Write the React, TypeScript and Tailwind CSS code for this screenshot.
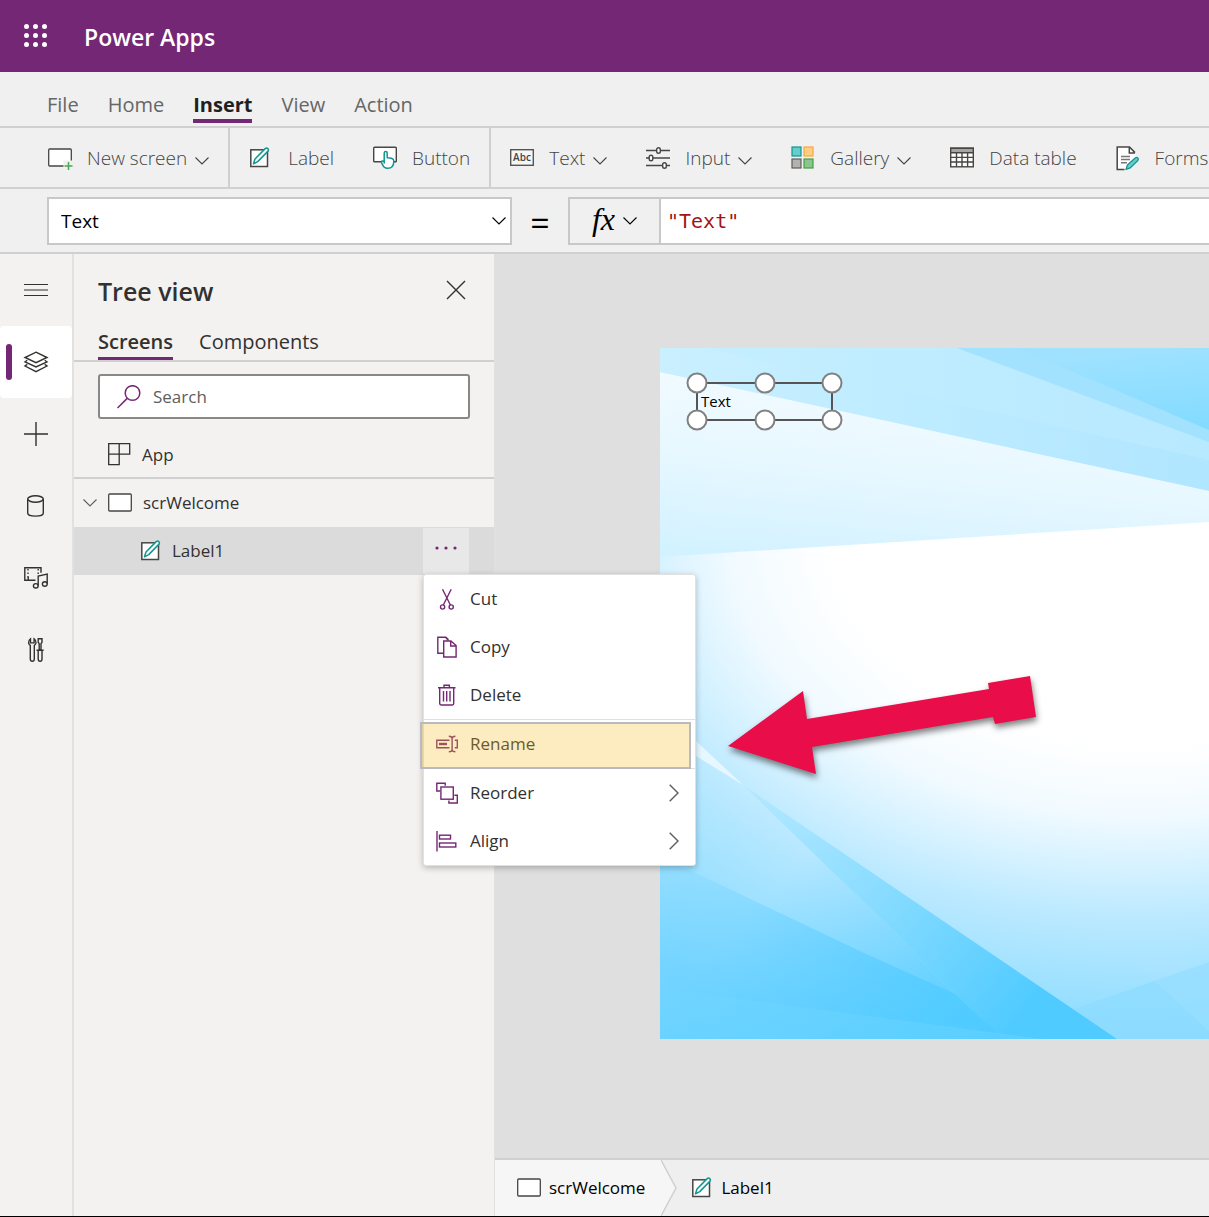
import React from "react";

type IconProps = { className?: string };

const Chevron = ({ className = "" }: IconProps) => (
  <svg viewBox="0 0 14 8" className={`h-2 w-3.5 shrink-0 ${className}`} fill="none" stroke="currentColor" strokeWidth="1.1">
    <path d="M.5.5 7 7 13.5.5" />
  </svg>
);

const ChevronRight = () => (
  <svg viewBox="0 0 10 18" className="h-[18px] w-2.5 shrink-0" fill="none" stroke="#605e5c" strokeWidth="1.4">
    <path d="M.7.7 9 9 .7 17.3" />
  </svg>
);

const Waffle = () => (
  <svg viewBox="0 0 24 24" className="size-6" fill="#fff">
    {[2.5, 11.5, 20.5].map((y) => [2.5, 11.5, 20.5].map((x) => <circle key={`${x}-${y}`} cx={x} cy={y} r="2.5" />))}
  </svg>
);

const ScreenIcon = ({ plus = false }: { plus?: boolean }) => (
  <svg viewBox="0 0 24 24" className="size-6 shrink-0 overflow-visible" fill="none">
    <rect x=".7" y="3" width="22.6" height="17" rx="1" fill="#fff" stroke="#484644" strokeWidth="1.3" />
    {plus && (
      <>
        <rect x="15.5" y="14.5" width="9" height="9" fill="#f0f0f0" />
        <path d="M20.5 16v8M16.5 20h8" stroke="#4ba64f" strokeWidth="1.5" />
      </>
    )}
  </svg>
);

const LabelIcon = () => (
  <svg viewBox="0 0 24 24" className="size-6 shrink-0 overflow-visible" fill="none">
    <rect x="1.8" y="3.8" width="16.7" height="16.7" fill="#fff" stroke="#484644" strokeWidth="1.5" />
    <path d="M4.5 17.8 6 13 16.2 2.6c1.9-1.5 4.1.6 2.8 2.5L8.7 15.6Z" fill="#fff" stroke="#0f9690" strokeWidth="1.5" strokeLinejoin="round" />
  </svg>
);

const ButtonIcon = () => (
  <svg viewBox="0 0 24 24" className="size-6 shrink-0 overflow-visible" fill="none">
    <rect x=".7" y="1.2" width="22.6" height="14.6" rx=".8" fill="#fff" stroke="#484644" strokeWidth="1.4" />
    <path d="M11.2 17V7.2c0-2.2 3-2.2 3 0v4.6c3.4.2 6.6.3 6.6 3.2 0 4.5-1.6 7.3-6 7.3-3.4 0-4.5-1.8-6.3-5.7-.5-1.7 1.5-2.3 2.7-.7Z" fill="#fff" stroke="#0f9690" strokeWidth="1.5" strokeLinejoin="round" />
  </svg>
);

const TextIcon = () => (
  <svg viewBox="0 0 24 24" className="size-6 shrink-0" fill="none">
    <rect x=".7" y="3.7" width="22.6" height="15.6" fill="#f6f6f6" stroke="#555" strokeWidth="1.4" />
    <text x="12" y="15.3" textAnchor="middle" fontSize="10" fontWeight="600" fill="#444" fontFamily="Open Sans, sans-serif">Abc</text>
  </svg>
);

const InputIcon = () => (
  <svg viewBox="0 0 24 24" className="size-6 shrink-0" fill="none" stroke="#484644" strokeWidth="1.4">
    <path d="M0 4.5h24M0 12h24M0 19.5h24" />
    <g fill="#fff">
      <rect x="10.7" y="1.7" width="3.6" height="5.6" rx="1.8" />
      <rect x="3.2" y="9.2" width="3.6" height="5.6" rx="1.8" />
      <rect x="16.7" y="16.7" width="3.6" height="5.6" rx="1.8" />
    </g>
  </svg>
);

const GalleryIcon = () => (
  <svg viewBox="0 0 24 24" className="size-6 shrink-0">
    <rect x="1" y="1" width="9" height="9" fill="#66cccc" stroke="#0f9690" strokeWidth="1.2" />
    <rect x="13" y="1" width="9" height="9" fill="#ffce85" stroke="#f9a83a" strokeWidth="1.2" />
    <rect x="1" y="13" width="9" height="9" fill="#b3b2b1" stroke="#605e5c" strokeWidth="1.2" />
    <rect x="13" y="13" width="9" height="9" fill="#8bc48d" stroke="#43a047" strokeWidth="1.2" />
  </svg>
);

const TableIcon = () => (
  <svg viewBox="0 0 24 24" className="size-6 shrink-0" fill="none" stroke="#484644" strokeWidth="1.4">
    <rect x=".7" y="2.2" width="22.6" height="18.6" fill="#fff" />
    <path d="M.7 2.2h22.6v4.6H.7Z" fill="#a6a5a4" />
    <path d="M.7 11.4h22.6M.7 16h22.6M6.5 6.8v14M12 6.8v14M17.6 6.8v14" />
  </svg>
);

const FormsIcon = () => (
  <svg viewBox="0 0 24 24" className="size-6 shrink-0 overflow-visible" fill="none">
    <path d="M1.2 1h12.5l5.5 5.6V16L9 23H1.2Z" fill="#fff" />
    <path d="M8.5 23.5H1.2V1h12.3l5.5 5.6M13.3 1v6H19" stroke="#484644" strokeWidth="1.5" />
    <path d="M5 10.5h9M5 13.5h9M5 16.8h6" stroke="#777" strokeWidth="1.4" />
    <path d="m10 23.5 1.4-4.5 7.8-7c2-1.6 4.1.6 2.6 2.5l-7.5 7.4Z" fill="#66cccc" stroke="#0f9690" strokeWidth="1.3" strokeLinejoin="round" />
  </svg>
);

const railIcons: { name: string; art: React.ReactNode }[] = [
  { name: "Menu", art: <path d="M0 6.5h24M0 12h24M0 17.5h24" strokeWidth="1.1" /> },
  {
    name: "Tree view",
    art: (
      <>
        <path d="m12 2.2 11 5.3-11 5.2L1 7.5Z" />
        <path d="M3.3 10.2 1 11.8 12 17l11-5.2-2.3-1.6M3.3 14.4 1 16l11 5.6L23 16l-2.3-1.6" />
      </>
    ),
  },
  { name: "Insert", art: <path d="M12 0v24M0 12h24" /> },
  {
    name: "Data",
    art: (
      <>
        <ellipse cx="11.5" cy="5" rx="7.8" ry="3.2" />
        <path d="M3.7 5v14c0 4.2 15.6 4.2 15.6 0V5" />
      </>
    ),
  },
  {
    name: "Media",
    art: (
      <>
        <path d="M11.5 14.2H.8V1.8H17v5M4.2 14V11" />
        <path d="M4 3v10M14.2 3v5" strokeDasharray="1.5 2" />
        <path d="M14.2 19.5V10l9-2v9.5" />
        <ellipse cx="11.8" cy="19.8" rx="2.4" ry="2.2" />
        <ellipse cx="20.8" cy="18" rx="2.4" ry="2.2" />
      </>
    ),
  },
  {
    name: "Advanced tools",
    art: (
      <>
        <path d="M6.5.8C4.8 2 4.4 3.4 4.6 5c.2 1.3 1 2 1.7 2.4V21c0 3 4 3 4 0V7.4c.8-.5 1.6-1.1 1.7-2.4.2-1.6-.3-3-1.9-4.2v4.1H6.5Z" />
        <path d="M14.2.8h3.8v3.4l-1 1.5v6h-1.8v-6l-1-1.5ZM12.5 12.3h7.2M14.2 12.3V21c0 3 3.8 3 3.8 0v-8.7" />
      </>
    ),
  },
];

const tools: { label: string; icon: React.ReactNode; menu?: boolean }[][] = [
  [{ label: "New screen", icon: <ScreenIcon plus />, menu: true }],
  [
    { label: "Label", icon: <LabelIcon /> },
    { label: "Button", icon: <ButtonIcon /> },
  ],
  [
    { label: "Text", icon: <TextIcon />, menu: true },
    { label: "Input", icon: <InputIcon />, menu: true },
    { label: "Gallery", icon: <GalleryIcon />, menu: true },
    { label: "Data table", icon: <TableIcon /> },
    { label: "Forms", icon: <FormsIcon />, menu: true },
  ],
];

type MenuEntry = { label: string; art: React.ReactNode; submenu?: boolean; marked?: boolean };

const menuEntries: MenuEntry[] = [
  {
    label: "Cut",
    art: (
      <>
        <path d="m6.5 1.2 8 16M15.2 1.2l-8 16" />
        <circle cx="6.6" cy="19" r="2.1" />
        <circle cx="15.2" cy="19" r="2.1" />
      </>
    ),
  },
  {
    label: "Copy",
    art: (
      <>
        <path d="M7 17.2H1.8V1.2h8l2.6 2.3M12.5 4.5 9.5 1.2" />
        <path d="M7.7 21V5h7.2l5.2 4.6V21ZM14.7 5v5h5.4" />
      </>
    ),
  },
  {
    label: "Delete",
    art: (
      <>
        <path d="M2 3.7h17.5M8 3.5V1.2h5.4v2.3M3.7 4v15.6q0 1.4 1.4 1.4h11.2q1.4 0 1.4-1.4V4" />
        <path d="M7.5 7v10.5M10.7 7v10.5M14 7v10.5" />
      </>
    ),
  },
  {
    label: "Rename",
    marked: true,
    art: (
      <>
        <path d="M13.5 14.7H.8V7.2h12.7M18.8 7.2h2.5v7.5h-2.5" />
        <path d="M3 11h8" strokeWidth="2.4" />
        <path d="M12.8 3.2q3.3 0 3.3 2.2v11.2q0 2.2-3.3 2.2M19.4 3.2q-3.3 0-3.3 2.2v11.2q0 2.2 3.3 2.2" />
      </>
    ),
  },
  {
    label: "Reorder",
    submenu: true,
    art: (
      <>
        <rect x="4.9" y="5" width="12.4" height="12.2" />
        <path d="M4 9H.8V1.2h8.4v2.5M18.4 13.2h2.9v7.8h-8.4v-2.6" />
      </>
    ),
  },
  {
    label: "Align",
    submenu: true,
    art: (
      <>
        <path d="M1 1v20.5" />
        <rect x="3.5" y="5.2" width="11" height="3.8" />
        <rect x="3.5" y="13" width="16.3" height="4" />
      </>
    ),
  },
];

function ContextMenu() {
  return (
    <div role="menu" className="absolute left-0 top-full z-20 flex w-[273px] flex-col rounded-[3px] border border-[#e3e1df] bg-white shadow-[0_2px_6px_rgba(0,0,0,0.25)]">
      {menuEntries.map((entry) => (
        <React.Fragment key={entry.label}>
          {entry.marked && <hr className="border-[#e1dfdd]" />}
          <button role="menuitem" className="relative flex h-12 items-center pl-3 pr-4 text-left text-[17px] text-[#323130]">
            <svg viewBox="0 0 22 22" className="mr-3 size-[22px] shrink-0 overflow-visible" fill="none" stroke="#742774" strokeWidth="1.4">
              {entry.art}
            </svg>
            <span className="flex-1">{entry.label}</span>
            {entry.submenu && <ChevronRight />}
            {entry.marked && <span className="absolute -left-1 right-1 top-0.5 -bottom-px z-10 border-2 border-[#b9bac1] bg-[rgba(247,189,38,0.29)]" />}
          </button>
          {entry.marked && <hr className="border-[#e1dfdd]" />}
        </React.Fragment>
      ))}
    </div>
  );
}

function TreePanel() {
  return (
    <aside className="flex w-[421px] shrink-0 flex-col border-r border-[#e1e1e1] bg-[#f3f2f1] text-[#323130]">
      <div className="flex h-[72px] items-center justify-between pl-6 pr-7">
        <h2 className="pt-1 text-[25px] font-semibold">Tree view</h2>
        <button aria-label="Close tree view">
          <svg viewBox="0 0 20 20" className="size-5" fill="none" stroke="#323130" strokeWidth="1.4">
            <path d="m1 1 18 18M19 1 1 19" />
          </svg>
        </button>
      </div>
      <div role="tablist" className="flex h-9 items-stretch gap-[26px] border-b-2 border-[#d0d0d0] pl-6 text-xl">
        <button role="tab" aria-selected="true" className="border-b-[3px] border-[#742774] font-semibold leading-7">Screens</button>
        <button role="tab" aria-selected="false" className="border-b-[3px] border-transparent leading-7">Components</button>
      </div>
      <label className="mx-6 my-3 flex h-[45px] items-center gap-3 rounded-[3px] border-2 border-[#8a8886] bg-white pl-[17px]">
        <svg viewBox="0 0 24 24" className="size-6 shrink-0" fill="none" stroke="#742774" strokeWidth="1.5">
          <circle cx="15.5" cy="8" r="7.3" />
          <path d="M10.2 13.4.5 23" />
        </svg>
        <input type="text" aria-label="Search" placeholder="Search" className="min-w-0 flex-1 bg-transparent text-[17px] outline-none placeholder:text-[#605e5c]" />
      </label>
      <ul role="tree" className="text-[17px]">
        <li role="treeitem" className="flex h-12 items-center gap-[11px] border-b-2 border-[#d0d0d0] pl-[33px] pt-0.5">
          <svg viewBox="0 0 24 24" className="size-6" fill="none" stroke="#323130" strokeWidth="1.3">
            <path d="M1.7.7h21v10.5h-21ZM12.2.7v21H1.7V11.2" />
          </svg>
          App
        </li>
        <li role="treeitem" aria-expanded="true">
          <div className="flex h-12 items-center gap-[11px] pl-[9px]">
            <Chevron className="text-[#605e5c]" />
            <ScreenIcon />
            scrWelcome
          </div>
          <ul role="group">
            <li role="treeitem" aria-selected="true" className="flex h-12 items-center gap-2 bg-[#dbdbdb] pl-[66px]">
              <LabelIcon />
              <span className="flex-1">Label1</span>
              <div className="relative mr-[25px] flex">
                <button aria-label="More actions" className="flex h-[46px] w-[46px] items-center justify-center bg-[#e8e8e8] pb-1.5">
                  <svg viewBox="0 0 22 4" className="h-1 w-[22px]" fill="#742774">
                    <circle cx="2" cy="2" r="1.6" />
                    <circle cx="11" cy="2" r="1.6" />
                    <circle cx="20" cy="2" r="1.6" />
                  </svg>
                </button>
                <ContextMenu />
              </div>
            </li>
          </ul>
        </li>
      </ul>
    </aside>
  );
}

function Wallpaper() {
  return (
    <svg viewBox="0 0 549 691" preserveAspectRatio="xMinYMin slice" className="block h-[691px] w-full">
      <defs>
        <radialGradient id="glow" gradientUnits="userSpaceOnUse" cx="0" cy="0" r="640" gradientTransform="translate(480 180) scale(1.43 1)">
          <stop offset=".34" stopColor="#fff" />
          <stop offset=".45" stopColor="#f1faff" />
          <stop offset=".53" stopColor="#d6f2ff" />
          <stop offset=".61" stopColor="#bbe9ff" />
          <stop offset=".72" stopColor="#9ee1ff" />
          <stop offset=".85" stopColor="#7dd7ff" />
          <stop offset=".97" stopColor="#6cd2ff" />
        </radialGradient>
        <linearGradient id="upper" x1="0" y1="0" x2="1" y2="0">
          <stop offset="0" stopColor="#caf0ff" />
          <stop offset="1" stopColor="#b0e6ff" />
        </linearGradient>
        <linearGradient id="pale" x1=".5" y1="0" x2=".2" y2="1">
          <stop offset="0" stopColor="#f3fbff" />
          <stop offset=".5" stopColor="#e8f8ff" />
          <stop offset="1" stopColor="#d3f2ff" />
        </linearGradient>
        <linearGradient id="corner" x1=".7" y1="0" x2=".9" y2="1">
          <stop offset="0" stopColor="#9fe2ff" />
          <stop offset="1" stopColor="#82dbff" />
        </linearGradient>
        <linearGradient id="beam" gradientUnits="userSpaceOnUse" x1="83" y1="437" x2="360" y2="670">
          <stop offset="0" stopColor="#a6e5ff" stopOpacity=".5" />
          <stop offset=".45" stopColor="#8cddff" />
          <stop offset="1" stopColor="#50cbff" />
        </linearGradient>
        <linearGradient id="fan" gradientUnits="userSpaceOnUse" x1="60" y1="430" x2="340" y2="691">
          <stop offset=".3" stopColor="#60ceff" stopOpacity="0" />
          <stop offset="1" stopColor="#4ecbff" />
        </linearGradient>
        <linearGradient id="floor" gradientUnits="userSpaceOnUse" x1="0" y1="540" x2="300" y2="691">
          <stop offset="0" stopColor="#55caff" stopOpacity=".1" />
          <stop offset="1" stopColor="#4ecbff" stopOpacity=".8" />
        </linearGradient>
      </defs>
      <rect width="549" height="691" fill="url(#glow)" />
      <path d="M0 24 549 143v31L0 209Z" fill="url(#pale)" />
      <path d="M0 0h549v143L0 24Z" fill="url(#upper)" />
      <path d="M44 0h253l252 94v18Z" fill="#c2edff" opacity=".45" />
      <path d="M297 0h252v94Z" fill="#a2e2fe" />
      <path d="M357 0h192v82Z" fill="url(#corner)" />
      <path d="m36 393 47 44-47-29Z" fill="#fff" opacity=".6" />
      <path d="M83 437 0 420V691H345Q285 640 240 589Z" fill="url(#fan)" />
      <path d="M36 525 204 605 311 653 345 691H0V510Z" fill="url(#floor)" />
      <path d="m83 437 374 254H345Q285 640 240 589Z" fill="url(#beam)" />
      <path d="M0 640 382 691H0Z" fill="#74d6ff" opacity=".35" />
      <path d="m549 614-135 47 43 30h92Z" fill="#8bdcff" opacity=".7" />
      <path d="m453 595 96 88v-69Z" fill="#b2e8ff" opacity=".2" />
    </svg>
  );
}

const handles = [
  "left-0 top-0",
  "left-1/2 top-0",
  "left-full top-0",
  "left-0 top-full",
  "left-1/2 top-full",
  "left-full top-full",
];

function Canvas() {
  return (
    <main className="flex min-w-0 flex-1 flex-col bg-[#dfdfdf]">
      <div className="flex-1 pl-[165px] pt-[94px]">
        <div className="relative">
          <Wallpaper />
          <div className="absolute left-9 top-[34px] flex h-[39px] w-[137px] items-center border-2 border-[#555] pl-[3px] text-[15px] text-black">
            Text
            <div className="absolute -inset-px">
              {handles.map((place) => (
                <span key={place} className={`absolute size-[21px] -translate-x-1/2 -translate-y-1/2 rounded-full border-2 border-[#808080] bg-white ${place}`} />
              ))}
            </div>
          </div>
          <svg viewBox="728 676 310 108" className="absolute left-[68px] top-[328px] h-[108px] w-[310px] overflow-visible drop-shadow-[1px_4px_3px_rgba(0,0,0,0.5)]">
            <path d="m728 746 75-55 4 28 182-30-1-6 42-7 6 41-41 7-2-7-181 30 4 27Z" fill="#e90d4a" />
          </svg>
        </div>
      </div>
      <nav aria-label="Selection path" className="flex h-[58px] items-stretch border-t-2 border-[#d0d0d0] bg-[#efefef] text-[17px] text-black">
        <button className="flex items-center gap-2 bg-[#f6f6f6] pl-[22px] pr-4">
          <ScreenIcon />
          scrWelcome
        </button>
        <svg viewBox="0 0 16 56" preserveAspectRatio="none" className="h-full w-4" fill="none">
          <path d="M0 0 15 28 0 56Z" fill="#f6f6f6" />
          <path d="M0 0 15 28 0 56" stroke="#d0d0d0" strokeWidth="1.5" />
        </svg>
        <button className="flex items-center gap-1.5 pl-3.5">
          <LabelIcon />
          Label1
        </button>
      </nav>
    </main>
  );
}

export default function App() {
  return (
    <div className="flex min-h-screen flex-col overflow-x-hidden border-b border-black bg-[#f0f0f0] font-['Open_Sans','Noto_Sans',sans-serif]">
      <header className="flex h-[72px] items-center gap-9 bg-[#742774] pl-6 text-white">
        <button aria-label="App launcher">
          <Waffle />
        </button>
        <h1 className="pt-0.5 text-[23px] font-semibold">Power Apps</h1>
      </header>

      <nav className="flex h-14 items-end gap-[29px] border-b-2 border-[#d0d0d0] pl-[47px] text-xl text-[#666]">
        {["File", "Home", "Insert", "View", "Action"].map((tab) => (
          <a
            key={tab}
            href={`#${tab.toLowerCase()}`}
            className={
              tab === "Insert"
                ? "mb-[3px] border-b-4 border-[#742774] font-bold leading-7 text-[#1f1f1f]"
                : "mb-[3px] border-b-4 border-transparent leading-7"
            }
          >
            {tab}
          </a>
        ))}
      </nav>

      <div role="toolbar" className="flex h-[61px] items-stretch overflow-hidden border-b-2 border-[#d0d0d0] pl-[29px] text-[19px] font-light text-[#444]">
        {tools.map((group, i) => (
          <div key={i} className="flex shrink-0 items-center gap-[39px] border-r-2 border-[#d0d0d0] px-[19px] last:border-r-0">
            {group.map((tool) => (
              <button key={tool.label} className="flex items-center gap-[15px]">
                {tool.icon}
                <span className="flex items-center gap-2 whitespace-nowrap pt-0.5">
                  {tool.label}
                  {tool.menu && <Chevron className="mt-1" />}
                </span>
              </button>
            ))}
          </div>
        ))}
      </div>

      <div className="flex h-[65px] items-center border-b-2 border-[#d0d0d0] pl-[47px]">
        <div className="relative w-[465px] shrink-0">
          <select aria-label="Property" className="h-12 w-full appearance-none border-2 border-[#c8c8c8] bg-white pl-3 pt-0.5 text-[19px] text-black outline-none">
            <option>Text</option>
          </select>
          <Chevron className="pointer-events-none absolute right-1.5 top-5 text-black" />
        </div>
        <span className="flex w-14 shrink-0 justify-center pt-1 text-[34px] leading-none text-black">=</span>
        <button aria-label="Formula menu" className="flex h-12 w-[91px] shrink-0 items-center justify-center gap-2 border-2 border-r-0 border-[#c8c8c8] text-black">
          <span className="pb-1 font-['Liberation_Serif',serif] text-[32px] leading-none italic">fx</span>
          <Chevron />
        </button>
        <input aria-label="Formula" type="text" defaultValue={'"Text"'} className="h-12 min-w-0 flex-1 border-2 border-r-0 border-[#c8c8c8] bg-white pl-1.5 font-['DejaVu_Sans_Mono',monospace] text-xl text-[#a31515] outline-none" />
      </div>

      <div className="flex flex-1">
        <nav aria-label="Panels" className="flex w-[74px] shrink-0 flex-col border-r-2 border-[#e1e1e1] bg-[#f3f2f1]">
          {railIcons.map((item) => (
            <button
              key={item.name}
              aria-label={item.name}
              className={
                item.name === "Tree view"
                  ? "relative flex h-[72px] items-center justify-center rounded-sm bg-white"
                  : "relative flex h-[72px] items-center justify-center"
              }
            >
              {item.name === "Tree view" && <span className="absolute left-1.5 h-9 w-1.5 rounded-sm bg-[#742774]" />}
              <svg viewBox="0 0 24 24" className="size-6 overflow-visible" fill="none" stroke="#323130" strokeWidth="1.4">
                {item.art}
              </svg>
            </button>
          ))}
        </nav>
        <TreePanel />
        <Canvas />
      </div>
    </div>
  );
}
